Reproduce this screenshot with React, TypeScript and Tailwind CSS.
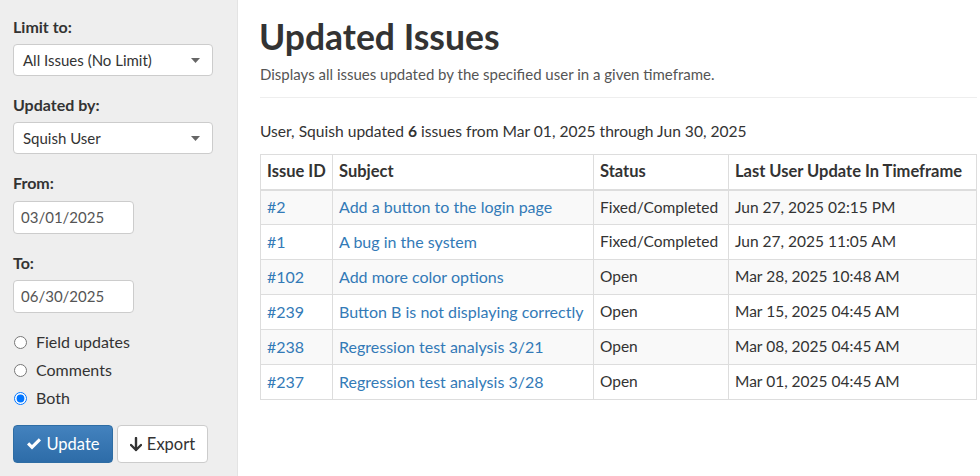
import React from "react";

const rows = [
  { id: "#2", subject: "Add a button to the login page", status: "Fixed/Completed", date: "Jun 27, 2025 02:15 PM" },
  { id: "#1", subject: "A bug in the system", status: "Fixed/Completed", date: "Jun 27, 2025 11:05 AM" },
  { id: "#102", subject: "Add more color options", status: "Open", date: "Mar 28, 2025 10:48 AM" },
  { id: "#239", subject: "Button B is not displaying correctly", status: "Open", date: "Mar 15, 2025 04:45 AM" },
  { id: "#238", subject: "Regression test analysis 3/21", status: "Open", date: "Mar 08, 2025 04:45 AM" },
  { id: "#237", subject: "Regression test analysis 3/28", status: "Open", date: "Mar 01, 2025 04:45 AM" },
];

function Select({ value }: { value: string }) {
  return (
    <div className="flex items-center justify-between w-[200px] h-[32px] bg-white border border-[#cccccc] rounded-[4px] pl-[9px] pr-[12px] text-[15px] text-[#333]">
      <span>{value}</span>
      <svg width="9" height="5" viewBox="0 0 9 5">
        <path d="M0 0 L9 0 L4.5 5 Z" fill="#666" />
      </svg>
    </div>
  );
}

function DateInput({ value }: { value: string }) {
  return (
    <div className="flex items-center w-[121px] h-[33px] bg-white border border-[#cccccc] rounded-[4px] pl-[7px] text-[15px] text-[#555]">
      {value}
    </div>
  );
}

function Radio({ label, checked }: { label: string; checked?: boolean }) {
  return (
    <label className="flex items-center h-[28px] text-[16px] text-[#333]">
      <input type="radio" name="mode" defaultChecked={checked} className="w-[13px] h-[13px] m-0 ml-[1px] mr-[9px]" />
      {label}
    </label>
  );
}

export default function App() {
  return (
    <div className="flex w-[980px] h-[476px] overflow-hidden bg-white text-[#333]" style={{ fontFamily: "Lato, 'Open Sans', sans-serif" }}>
      <aside className="w-[238px] shrink-0 h-full bg-[#eeeeee] border-r border-[#e3e3e3] pl-[13px] pt-[17px]">
        <div className="text-[16px] font-bold text-[#333] leading-[20px] mb-[7px]">Limit to:</div>
        <Select value="All Issues (No Limit)" />
        <div className="text-[16px] font-bold text-[#333] leading-[20px] mt-[19px] mb-[7px]">Updated by:</div>
        <Select value="Squish User" />
        <div className="text-[16px] font-bold text-[#333] leading-[20px] mt-[19px] mb-[8px]">From:</div>
        <DateInput value="03/01/2025" />
        <div className="text-[16px] font-bold text-[#333] leading-[20px] mt-[19px] mb-[7px]">To:</div>
        <DateInput value="06/30/2025" />
        <div className="flex flex-col mt-[15px]">
          <Radio label="Field updates" />
          <Radio label="Comments" />
          <Radio label="Both" checked />
        </div>
        <div className="flex gap-[4px] mt-[13px]">
          <button className="flex items-center justify-center gap-[4px] w-[100px] h-[38px] rounded-[4px] border border-[#2e6da4] bg-gradient-to-b from-[#4382be] to-[#2d6ca8] text-white text-[16.5px]">
            <svg width="16" height="14" viewBox="0 0 16 14">
              <path d="M1 7.5 L3.2 5.3 L6 8.1 L12.8 1.3 L15 3.5 L6 12.5 Z" fill="white" />
            </svg>
            Update
          </button>
          <button className="flex items-center justify-center gap-[5px] w-[91px] h-[38px] rounded-[4px] border border-[#cccccc] bg-white text-[#333] text-[16.5px]">
            <svg width="12" height="15" viewBox="0 0 12 15">
              <path d="M6 1 L6 13 M1 8 L6 13 L11 8" stroke="#333" strokeWidth="2.4" fill="none" strokeLinecap="round" strokeLinejoin="round" />
            </svg>
            Export
          </button>
        </div>
      </aside>
      <main className="flex-1 pl-[22px] pr-[4px] pt-[15px]">
        <h1 className="text-[35.5px] font-bold leading-[44px] text-[#333] ml-[-1px]">Updated Issues</h1>
        <p className="text-[15px] text-[#555] mt-[5px] leading-[20px]">Displays all issues updated by the specified user in a given timeframe.</p>
        <hr className="border-t border-[#eeeeee] mt-[13px]" />
        <p className="text-[15.6px] text-[#333] mt-[23px] leading-[20px]">
          User, Squish updated <b>6</b> issues from Mar 01, 2025 through Jun 30, 2025
        </p>
        <table className="mt-[13px] border-collapse text-[16px] w-[716px] table-fixed">
          <colgroup>
            <col className="w-[72px]" />
            <col className="w-[261px]" />
            <col className="w-[135px]" />
            <col className="w-[248px]" />
          </colgroup>
          <thead>
            <tr className="h-[35px]">
              {["Issue ID", "Subject", "Status", "Last User Update In Timeframe"].map((h) => (
                <th key={h} className="border border-[#dddddd] border-b-2 px-[6px] text-left font-bold text-[16.5px] text-[#333] whitespace-nowrap">
                  {h}
                </th>
              ))}
            </tr>
          </thead>
          <tbody>
            {rows.map((r, i) => (
              <tr key={r.id} className={i % 2 === 0 ? "h-[35px] bg-[#f9f9f9]" : "h-[35px] bg-white"}>
                <td className="border border-[#dddddd] px-[6px] text-[#337ab7] whitespace-nowrap">{r.id}</td>
                <td className="border border-[#dddddd] px-[6px] text-[#337ab7] whitespace-nowrap">{r.subject}</td>
                <td className="border border-[#dddddd] px-[6px] text-[15.5px] text-[#333] whitespace-nowrap">{r.status}</td>
                <td className="border border-[#dddddd] px-[6px] text-[15.5px] text-[#333] whitespace-nowrap">{r.date}</td>
              </tr>
            ))}
          </tbody>
        </table>
      </main>
    </div>
  );
}
